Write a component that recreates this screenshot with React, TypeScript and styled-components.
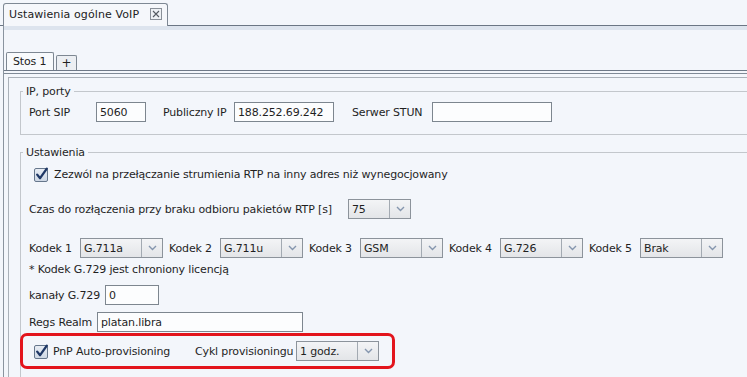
import React from "react";
import styled, { createGlobalStyle } from "styled-components";

const Global = createGlobalStyle`
  html, body { margin: 0; padding: 0; background: #f3f6fb; }
  body {
    font-family: "DejaVu Sans", Tahoma, sans-serif;
    font-size: 11px;
    letter-spacing: -0.15px;
    color: #1f1f1f;
    overflow: hidden;
  }
  #root { width: 747px; height: 377px; overflow: hidden; }
`;

const Page = styled.div`
  width: 747px;
  height: 377px;
  overflow: hidden;
  background: #f3f6fb;
`;

const TopBar = styled.div`
  height: 25px;
  border-bottom: 1px solid #6b7684;
  display: flex;
  align-items: flex-end;
  padding-left: 3px;
`;

const DocTab = styled.div`
  box-sizing: border-box;
  height: 23px;
  width: 165px;
  margin-bottom: -1px;
  border: 1px solid #7e8894;
  border-bottom: none;
  border-radius: 3px 3px 0 0;
  background: #f5f7fb;
  display: flex;
  align-items: center;
  padding: 0 0 2px 5px;
  color: #222;
`;

const DocTabText = styled.span`
  flex: 1;
  letter-spacing: 0.1px;
`;

const CloseBox = styled.svg`
  flex: none;
  margin-right: 5px;
`;

const Body = styled.div`
  margin-left: 3px;
  border-left: 1px solid #8a949f;
  height: 351px;
`;

const Band = styled.div`
  height: 4px;
  background: #dde4ee;
`;

const TabStrip = styled.div`
  margin-top: 22px;
  display: flex;
  align-items: flex-end;
  gap: 2px;
  padding-left: 2px;
  border-bottom: 1px solid #6e7987;
`;

const SubTab = styled.div<{ $w: number; $h: number; $active?: boolean }>`
  box-sizing: border-box;
  width: ${(p) => p.$w}px;
  height: ${(p) => p.$h}px;
  border: 1px solid #7d8792;
  border-bottom: none;
  border-radius: 2px 2px 0 0;
  background: ${(p) => (p.$active ? "#f8fafc" : "#eceff3")};
  display: flex;
  align-items: center;
  justify-content: ${(p) => (p.$active ? "flex-start" : "center")};
  padding-left: ${(p) => (p.$active ? 6 : 0)}px;
  font-size: ${(p) => (p.$active ? 11 : 12)}px;
  color: #222;
`;

const PanelFrame = styled.div`
  margin-top: 2px;
  border-top: 1px solid #7f8a96;
  padding: 3px 0 0 4px;
`;

const InnerPanel = styled.div`
  border-top: 1px solid #aab1b9;
  border-left: 1px solid #aab1b9;
  padding-left: 11px;
  height: 320px;
`;

const Group = styled.fieldset<{ $mt: number; $pb: number }>`
  margin: ${(p) => p.$mt}px 0 0 0;
  padding: 0 0 ${(p) => p.$pb}px 8px;
  border: 1px solid #c3c7cc;
  border-right: none;
  min-width: 0;
`;

const Legend = styled.legend`
  padding: 0 3px;
  margin-left: -6px;
  line-height: 13px;
  color: #262626;
`;

const Row = styled.div<{ $mt: number; $h?: number }>`
  display: flex;
  align-items: center;
  height: ${(p) => p.$h ?? 20}px;
  margin-top: ${(p) => p.$mt}px;
  white-space: nowrap;
`;

const Note = styled.div<{ $mt: number }>`
  margin-top: ${(p) => p.$mt}px;
  line-height: 13px;
  white-space: nowrap;
`;

const Label = styled.span<{ $w: number; $ml?: number }>`
  flex: none;
  width: ${(p) => p.$w}px;
  margin-left: ${(p) => p.$ml ?? 0}px;
  white-space: nowrap;
`;

const Field = styled.div<{ $w: number }>`
  box-sizing: border-box;
  flex: none;
  width: ${(p) => p.$w}px;
  height: 20px;
  border: 1px solid #7d868f;
  background: #fcfdfe;
  padding-left: 3px;
  display: flex;
  align-items: center;
`;

const SelectBox = styled.div<{ $w: number }>`
  box-sizing: border-box;
  flex: none;
  width: ${(p) => p.$w}px;
  height: 20px;
  border: 1px solid #8c939b;
  background: linear-gradient(#f3f4f6, #e3e5e8);
  display: flex;
`;

const SelectValue = styled.div`
  flex: 1;
  padding-left: 3px;
  display: flex;
  align-items: center;
`;

const SelectArrow = styled.div`
  flex: none;
  width: 20px;
  border-left: 1px solid #a3aab2;
  display: flex;
  align-items: center;
  justify-content: center;
`;

const Highlight = styled.div`
  box-sizing: border-box;
  margin-top: 1px;
  margin-left: -9px;
  width: 375px;
  height: 36px;
  border: 3px solid #e3141c;
  border-radius: 7px;
  display: flex;
  align-items: center;
  padding-left: 11px;
  white-space: nowrap;
`;

const CheckWrap = styled.span<{ $ml: number }>`
  flex: none;
  display: flex;
  margin-left: ${(p) => p.$ml}px;
`;

const Check = ({ ml = 0 }: { ml?: number }) => (
  <CheckWrap $ml={ml}>
    <svg width="15" height="15" viewBox="0 0 15 15">
      <defs>
        <linearGradient id="cbg" x1="0" y1="0" x2="0" y2="1">
          <stop offset="0" stopColor="#e9eef5" />
          <stop offset="1" stopColor="#cdd7e4" />
        </linearGradient>
      </defs>
      <rect x="0.5" y="1.5" width="13" height="13" rx="1.5" fill="url(#cbg)" stroke="#66778c" />
      <path d="M3.2 7.6 L6.1 11.2 L12.8 1.6" fill="none" stroke="#1f3866" strokeWidth="2.3" strokeLinecap="round" strokeLinejoin="round" />
    </svg>
  </CheckWrap>
);

const Select = ({ w, value }: { w: number; value: string }) => (
  <SelectBox $w={w}>
    <SelectValue>{value}</SelectValue>
    <SelectArrow>
      <svg width="9" height="6" viewBox="0 0 9 6">
        <path d="M1 1 L4.5 4.5 L8 1" fill="none" stroke="#8596ae" strokeWidth="1.4" />
      </svg>
    </SelectArrow>
  </SelectBox>
);

const codecs = [
  { label: "Kodek 1", value: "G.711a" },
  { label: "Kodek 2", value: "G.711u" },
  { label: "Kodek 3", value: "GSM" },
  { label: "Kodek 4", value: "G.726" },
  { label: "Kodek 5", value: "Brak" },
];

export default function App() {
  return (
    <Page>
      <Global />
      <TopBar>
        <DocTab>
          <DocTabText>Ustawienia ogólne VoIP</DocTabText>
          <CloseBox width="12" height="12" viewBox="0 0 12 12">
            <rect x="0.5" y="0.5" width="11" height="11" fill="#eef1f5" stroke="#8a9099" />
            <path d="M3 3 L9 9 M9 3 L3 9" stroke="#555b63" strokeWidth="1.1" />
          </CloseBox>
        </DocTab>
      </TopBar>
      <Body>
        <Band />
        <TabStrip>
          <SubTab $w={48} $h={18} $active>Stos 1</SubTab>
          <SubTab $w={21} $h={15}>+</SubTab>
        </TabStrip>
        <PanelFrame>
          <InnerPanel>
            <Group $mt={7} $pb={12}>
              <Legend>IP, porty</Legend>
              <Row $mt={4}>
                <Label $w={67}>Port SIP</Label>
                <Field $w={50}>5060</Field>
                <Label $w={71} $ml={17}>Publiczny IP</Label>
                <Field $w={100}>188.252.69.242</Field>
                <Label $w={80} $ml={18}>Serwer STUN</Label>
                <Field $w={120} />
              </Row>
            </Group>
            <Group $mt={11} $pb={40}>
              <Legend>Ustawienia</Legend>
              <Row $mt={7} $h={16}>
                <Check ml={5} />
                <Label $w={500} $ml={5}>
                  Zezwól na przełączanie strumienia RTP na inny adres niż wynegocjowany
                </Label>
              </Row>
              <Row $mt={17}>
                <Label $w={319}>Czas do rozłączenia przy braku odbioru pakietów RTP [s]</Label>
                <Select w={63} value="75" />
              </Row>
              <Row $mt={19}>
                {codecs.map((c, i) => (
                  <React.Fragment key={c.label}>
                    <Label $w={51} $ml={i === 0 ? 0 : 6}>{c.label}</Label>
                    <Select w={83} value={c.value} />
                  </React.Fragment>
                ))}
              </Row>
              <Note $mt={5}>* Kodek G.729 jest chroniony licencją</Note>
              <Row $mt={9}>
                <Label $w={76}>kanały G.729</Label>
                <Field $w={54}>0</Field>
              </Row>
              <Row $mt={7}>
                <Label $w={68}>Regs Realm</Label>
                <Field $w={206}>platan.libra</Field>
              </Row>
              <Highlight>
                <Check />
                <Label $w={142} $ml={4}>PnP Auto-provisioning</Label>
                <Label $w={101}>Cykl provisioningu</Label>
                <Select w={83} value="1 godz." />
              </Highlight>
            </Group>
          </InnerPanel>
        </PanelFrame>
      </Body>
    </Page>
  );
}
